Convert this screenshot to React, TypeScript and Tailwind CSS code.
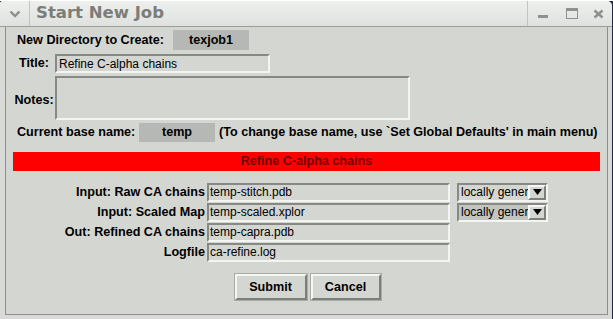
import type { ReactNode } from "react";

const sunken = "border-2 border-t-[#878985] border-l-[#878985] border-b-[#f4f5f3] border-r-[#f4f5f3]";
const raised = "border-2 border-t-[#f6f7f5] border-l-[#f6f7f5] border-b-[#7d7f7b] border-r-[#7d7f7b]";

function Field({ value, className = "" }: { value: string; className?: string }) {
  return (
    <div className={`${sunken} h-[19px] bg-[#d4d6d2] flex items-center pl-[1px] text-[12px] leading-none text-black ${className}`}>
      {value}
    </div>
  );
}

function Select({ shaded }: { shaded?: boolean }) {
  return (
    <div className={`${sunken} h-[19px] w-[91px] flex overflow-hidden`}>
      <div className={`w-[69px] overflow-hidden whitespace-nowrap pl-[2px] text-[12px] leading-[15px] ${shaded ? "bg-[#c3c5c1]" : "bg-[#d4d6d2]"}`}>
        locally gener
      </div>
      <div className={`${raised} w-[18px] bg-[#d4d6d2] flex items-center justify-center`}>
        <svg width="9" height="6" viewBox="0 0 9 6">
          <path d="M0 0 H9 L4.5 6 Z" fill="#000" />
        </svg>
      </div>
    </div>
  );
}

function Row({ label, children }: { label: string; children: ReactNode }) {
  return (
    <div className="flex items-center h-[20px]">
      <div className="w-[201px] text-right pr-[2px] font-bold text-[12.6px] whitespace-nowrap">{label}</div>
      {children}
    </div>
  );
}

export default function App() {
  return (
    <div className="w-[613px] h-[319px] bg-[#1d2a44] font-['Liberation_Sans',Arial,sans-serif] text-black">
      <div className="w-[612px] h-[319px] mt-[1px] rounded-tr-[5px] rounded-tl-[3px] bg-[#d9dad7] flex flex-col overflow-hidden">
        {/* title bar */}
        <div className="h-[26px] flex items-stretch bg-gradient-to-b from-[#eef0ee] to-[#dfe1de] border-b border-[#9c9e9a]">
          <div className="w-[30px] flex items-center justify-center border-r border-[#c2c4c0]">
            <svg width="12" height="8" viewBox="0 0 12 8">
              <path d="M1.5 1.5 L6 6 L10.5 1.5" stroke="#8d8f8b" strokeWidth="2.4" fill="none" />
            </svg>
          </div>
          <div className="flex-1 pl-[6px] flex items-center font-['DejaVu_Sans',sans-serif] font-bold text-[16.5px] text-[#7b7d79]">
            Start New Job
          </div>
          <div className="w-[85px] border-l border-[#c2c4c0] flex items-center">
            <div className="ml-[10px] w-[10px] h-[3px] bg-[#8f918d] mt-[6px]" />
            <div className="ml-[18px] w-[12px] h-[11px] border border-[#8f918d] border-t-[3px]" />
            <svg className="ml-[15px]" width="11" height="10" viewBox="0 0 11 10">
              <path d="M1.5 1.5 L9.5 8.5 M9.5 1.5 L1.5 8.5" stroke="#8f918d" strokeWidth="2.6" />
            </svg>
          </div>
        </div>

        {/* body */}
        <div className="flex-1 ml-[5px] mr-[4px] mb-[5px] border-l border-r border-b border-[#8d8f8b] bg-[#d4d6d2] flex flex-col pt-[3px]">
          <div className="flex items-center h-[20px]">
            <div className="w-[167px] pl-[11px] font-bold text-[12.6px] whitespace-nowrap">New Directory to Create:</div>
            <div className="w-[76px] h-[20px] bg-[#b6b8b5] flex items-center justify-center font-bold text-[12.6px]">texjob1</div>
          </div>

          <div className="flex items-center mt-[4px]">
            <div className="w-[49px] pl-[7px] flex justify-center font-bold text-[12.6px]">Title:</div>
            <Field value="Refine C-alpha chains" className="w-[215px] pl-[2px]" />
          </div>

          <div className="flex items-center mt-[3px]">
            <div className="w-[49px] pl-[7px] flex justify-center font-bold text-[12.6px] pt-[4px]">Notes:</div>
            <div className={`${sunken} w-[355px] h-[44px]`} />
          </div>

          <div className="flex items-center h-[20px] mt-[2px]">
            <div className="w-[133px] pl-[11px] font-bold text-[12.6px] whitespace-nowrap">Current base name:</div>
            <div className="w-[76px] h-[19px] bg-[#b6b8b5] flex items-center justify-center font-bold text-[12.6px]">temp</div>
            <div className="pl-[4px] font-bold text-[12.6px] whitespace-nowrap">
              (To change base name, use `Set Global Defaults' in main menu)
            </div>
          </div>

          <div className="mx-[7px] mt-[10px] h-[19px] bg-[#ff0000] flex items-center justify-center font-bold text-[12.6px] text-[#700000]">
            Refine C-alpha chains
          </div>

          <div className="flex flex-col mt-[11px]">
            <Row label="Input: Raw CA chains">
              <Field value="temp-stitch.pdb" className="w-[243px]" />
              <div className="ml-[7px]"><Select /></div>
            </Row>
            <Row label="Input: Scaled Map">
              <Field value="temp-scaled.xplor" className="w-[243px]" />
              <div className="ml-[7px]"><Select shaded /></div>
            </Row>
            <Row label="Out: Refined CA chains">
              <Field value="temp-capra.pdb" className="w-[243px]" />
            </Row>
            <Row label="Logfile">
              <Field value="ca-refine.log" className="w-[243px]" />
            </Row>
          </div>

          <div className="flex justify-center gap-[4px] mt-[12px] pl-[2px]">
            <button className={`${raised} w-[72px] h-[26px] bg-[#d4d6d2] font-bold text-[12.6px] outline outline-1 outline-[#a9aba7]`}>Submit</button>
            <button className={`${raised} w-[70px] h-[26px] bg-[#d4d6d2] font-bold text-[12.6px] outline outline-1 outline-[#a9aba7]`}>Cancel</button>
          </div>
        </div>
      </div>
    </div>
  );
}
